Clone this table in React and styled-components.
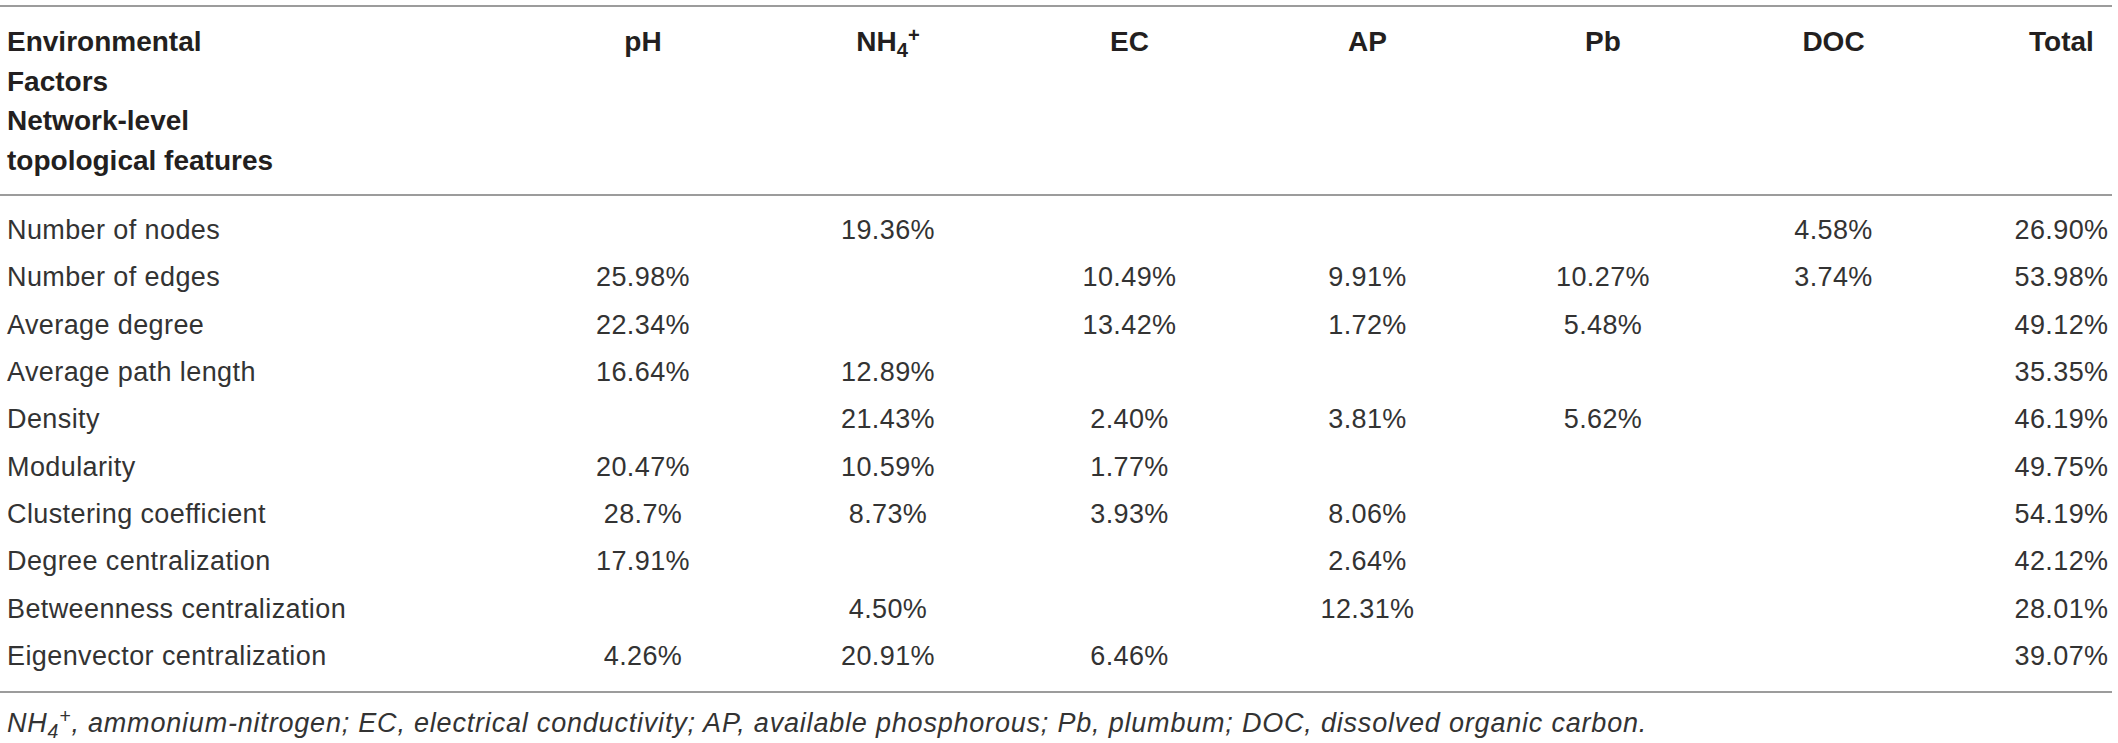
import React from "react";
import styled, { createGlobalStyle } from "styled-components";

const GlobalStyle = createGlobalStyle`
  body {
    margin: 0;
    background: #fff;
    font-family: "Liberation Sans", Arial, sans-serif;
    color: #231f20;
  }
`;

const COLS = "520px 246px 244px 239px 237px 234px 227px 165px";

const Page = styled.div`
  width: 2112px;
  padding-top: 5px;
`;

const Table = styled.div`
  border-top: 2px solid #9c9c9c;
`;

const HeadRow = styled.div`
  display: grid;
  grid-template-columns: ${COLS};
  align-items: start;
  padding: 15px 0 14px;
  border-bottom: 2px solid #9c9c9c;
  font-weight: 700;
  font-size: 28px;
  line-height: 39.5px;
`;

const Body = styled.div`
  padding: 11px 0;
  border-bottom: 2px solid #9c9c9c;
`;

const Row = styled.div`
  display: grid;
  grid-template-columns: ${COLS};
  align-items: center;
  height: 47.3px;
  font-size: 27px;
  color: #333;
  letter-spacing: 0.4px;
`;

const Label = styled.div`
  padding-left: 7px;
  white-space: nowrap;
`;

const Cell = styled.div`
  text-align: center;
  padding-left: ${(p) => (p.$last ? "64px" : "0")};
  white-space: nowrap;
`;

const Sub = styled.sub`
  font-size: 0.72em;
  line-height: 0;
  vertical-align: -0.3em;
`;

const Sup = styled.sup`
  font-size: 0.72em;
  line-height: 0;
  vertical-align: 0.45em;
`;

const Note = styled.p`
  margin: 0;
  padding: 14px 0 0 7px;
  font-size: 27px;
  line-height: 32px;
  font-style: italic;
  color: #333;
  letter-spacing: 0.8px;
  white-space: nowrap;
`;

const Ammonium = () => (
  <>
    NH<Sub>4</Sub>
    <Sup>+</Sup>
  </>
);

const heads = ["pH", <Ammonium key="nh4" />, "EC", "AP", "Pb", "DOC", "Total"];

const rows = [
  ["Number of nodes", "", "19.36%", "", "", "", "4.58%", "26.90%"],
  ["Number of edges", "25.98%", "", "10.49%", "9.91%", "10.27%", "3.74%", "53.98%"],
  ["Average degree", "22.34%", "", "13.42%", "1.72%", "5.48%", "", "49.12%"],
  ["Average path length", "16.64%", "12.89%", "", "", "", "", "35.35%"],
  ["Density", "", "21.43%", "2.40%", "3.81%", "5.62%", "", "46.19%"],
  ["Modularity", "20.47%", "10.59%", "1.77%", "", "", "", "49.75%"],
  ["Clustering coefficient", "28.7%", "8.73%", "3.93%", "8.06%", "", "", "54.19%"],
  ["Degree centralization", "17.91%", "", "", "2.64%", "", "", "42.12%"],
  ["Betweenness centralization", "", "4.50%", "", "12.31%", "", "", "28.01%"],
  ["Eigenvector centralization", "4.26%", "20.91%", "6.46%", "", "", "", "39.07%"],
];

export default function App() {
  return (
    <Page>
      <GlobalStyle />
      <Table>
        <HeadRow>
          <Label>
            Environmental
            <br />
            Factors
            <br />
            Network-level
            <br />
            topological features
          </Label>
          {heads.map((h, i) => (
            <Cell key={i} $last={i === heads.length - 1}>
              {h}
            </Cell>
          ))}
        </HeadRow>
        <Body>
          {rows.map((r) => (
            <Row key={r[0]}>
              <Label>{r[0]}</Label>
              {r.slice(1).map((v, i) => (
                <Cell key={i} $last={i === 6}>
                  {v}
                </Cell>
              ))}
            </Row>
          ))}
        </Body>
      </Table>
      <Note>
        <Ammonium />, ammonium-nitrogen; EC, electrical conductivity; AP, available
        phosphorous; Pb, plumbum; DOC, dissolved organic carbon.
      </Note>
    </Page>
  );
}
